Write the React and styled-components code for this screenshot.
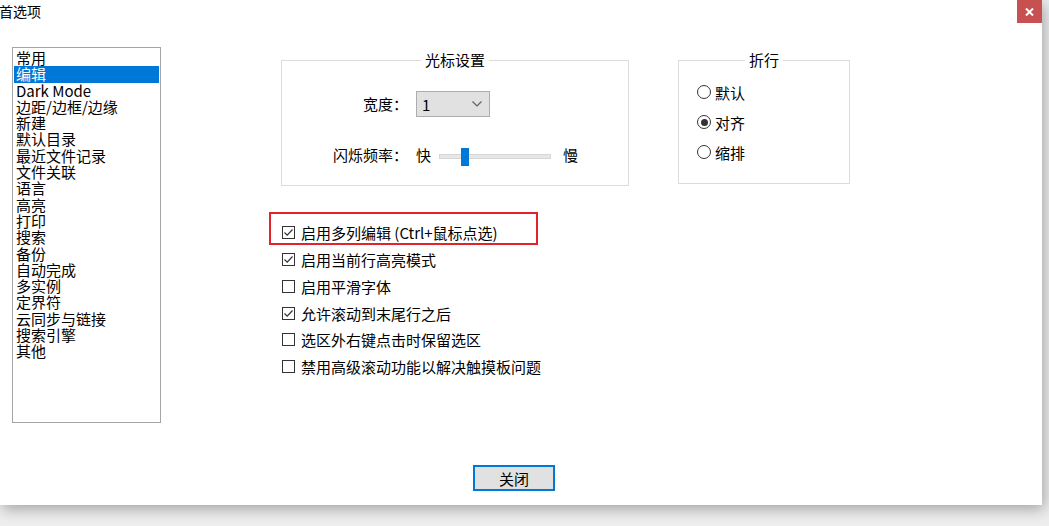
import React from "react";
import styled, { createGlobalStyle } from "styled-components";

const GlobalStyle = createGlobalStyle`
  html, body {
    margin: 0;
    padding: 0;
  }
  body {
    width: 1049px;
    height: 526px;
    overflow: hidden;
    background: #eeeeee;
    font-family: "Noto Sans CJK SC", "Noto Sans", sans-serif;
    color: #000;
  }
`;

const Dialog = styled.div`
  width: 1042px;
  height: 505px;
  background: #fff;
  box-shadow: 2px 4px 14px rgba(0, 0, 0, 0.32);
  display: flex;
  flex-direction: column;
  overflow: hidden;
`;

const TitleBar = styled.div`
  height: 23px;
  display: flex;
  justify-content: space-between;
  align-items: flex-start;
`;

const Title = styled.div`
  font-size: 14px;
  line-height: 20px;
  padding-top: 1px;
  margin-left: -1px;
`;

const CloseBox = styled.div`
  width: 25px;
  height: 23px;
  background: #c75050;
  display: flex;
  align-items: center;
  justify-content: center;
`;

const Body = styled.div`
  flex: 1;
  display: flex;
  align-items: flex-start;
`;

const ListBox = styled.div`
  box-sizing: border-box;
  margin: 24px 0 0 12px;
  width: 149px;
  height: 376px;
  border: 1px solid #a5a5a5;
  padding: 2px 1px;
  font-size: 15px;
  line-height: 16.3px;
`;

const ListItem = styled.div`
  padding-left: 2px;
  white-space: nowrap;
  background: ${(p) => (p.$active ? "#0078d7" : "transparent")};
  color: ${(p) => (p.$active ? "#fff" : "#000")};
`;

const Main = styled.div`
  margin-left: 120px;
  padding-top: 37px;
  display: flex;
  flex-direction: column;
`;

const GroupRow = styled.div`
  display: flex;
  gap: 49px;
  align-items: flex-start;
`;

const GroupBox = styled.div`
  box-sizing: border-box;
  width: ${(p) => p.$w}px;
  height: ${(p) => p.$h}px;
  border: 1px solid #dcdcdc;
  display: flex;
  flex-direction: column;
`;

const Legend = styled.div`
  align-self: center;
  margin-top: -9px;
  padding: 0 4px;
  background: #fff;
  font-size: 15px;
  line-height: 16px;
`;

const FieldGrid = styled.div`
  display: grid;
  grid-template-columns: 126px auto;
  column-gap: 8px;
  row-gap: 28px;
  align-items: center;
  margin-top: 23px;
  font-size: 15px;
`;

const FieldLabel = styled.div`
  text-align: right;
  line-height: 20px;
`;

const Combo = styled.div`
  box-sizing: border-box;
  width: 74px;
  height: 26px;
  background: #e1e1e1;
  border: 1px solid #adadad;
  display: flex;
  align-items: center;
  justify-content: space-between;
  padding: 0 7px 0 5px;
  font-size: 15px;
`;

const SliderRow = styled.div`
  display: flex;
  align-items: center;
  height: 20px;
  line-height: 20px;
`;

const SliderTrack = styled.div`
  position: relative;
  box-sizing: border-box;
  width: 112px;
  height: 5px;
  margin: 3px 12px 0 8px;
  background: #e7e7e7;
  border: 1px solid #d6d6d6;
`;

const SliderThumb = styled.div`
  position: absolute;
  top: -7px;
  width: 8px;
  height: 18px;
  background: #0078d7;
`;

const RadioList = styled.div`
  margin-top: 9px;
  padding-left: 18px;
  display: flex;
  flex-direction: column;
`;

const Option = styled.div`
  display: flex;
  align-items: center;
  gap: ${(p) => p.$gap}px;
  height: ${(p) => p.$h}px;
  font-size: 15px;
  white-space: nowrap;
`;

const RadioCircle = styled.span`
  box-sizing: border-box;
  width: 14px;
  height: 14px;
  border-radius: 50%;
  border: 1px solid #333;
  background: #fff;
  display: flex;
  align-items: center;
  justify-content: center;
  &::after {
    content: "";
    width: 7px;
    height: 7px;
    border-radius: 50%;
    background: ${(p) => (p.$on ? "#333" : "transparent")};
  }
`;

const CheckBox = styled.span`
  box-sizing: border-box;
  width: 13px;
  height: 13px;
  border: 1px solid #333;
  background: #fff;
  display: flex;
  align-items: center;
  justify-content: center;
`;

const CheckList = styled.div`
  position: relative;
  margin: 33.6px 0 0 1px;
  display: flex;
  flex-direction: column;
`;

const RedMark = styled.div`
  position: absolute;
  left: -13px;
  top: -7.6px;
  width: 269px;
  height: 33px;
  box-sizing: border-box;
  border: 2px solid #e3232b;
`;

const Footer = styled.div`
  padding: 0 0 14px 473px;
`;

const Button = styled.div`
  box-sizing: border-box;
  width: 82px;
  height: 26px;
  border: 2px solid #0078d7;
  background: #e1e1e1;
  display: flex;
  align-items: center;
  justify-content: center;
  font-size: 15px;
`;

const items = [
  "常用", "编辑", "Dark Mode", "边距/边框/边缘", "新建", "默认目录", "最近文件记录",
  "文件关联", "语言", "高亮", "打印", "搜索", "备份", "自动完成", "多实例", "定界符",
  "云同步与链接", "搜索引擎", "其他",
];

const checks = [
  ["启用多列编辑 (Ctrl+鼠标点选)", true],
  ["启用当前行高亮模式", true],
  ["启用平滑字体", false],
  ["允许滚动到末尾行之后", true],
  ["选区外右键点击时保留选区", false],
  ["禁用高级滚动功能以解决触摸板问题", false],
];

const radios = [["默认", false], ["对齐", true], ["缩排", false]];

export default function App() {
  return (
    <>
      <GlobalStyle />
      <Dialog>
        <TitleBar>
          <Title>首选项</Title>
          <CloseBox>
            <svg width="9" height="8" viewBox="0 0 9 8">
              <path d="M1 0.5 L8 7.5 M8 0.5 L1 7.5" stroke="#fff" strokeWidth="2" />
            </svg>
          </CloseBox>
        </TitleBar>
        <Body>
          <ListBox>
            {items.map((t, i) => (
              <ListItem key={t} $active={i === 1}>{t}</ListItem>
            ))}
          </ListBox>
          <Main>
            <GroupRow>
              <GroupBox $w={348} $h={126}>
                <Legend>光标设置</Legend>
                <FieldGrid>
                  <FieldLabel>宽度：</FieldLabel>
                  <Combo>
                    <span>1</span>
                    <svg width="10" height="6" viewBox="0 0 10 6">
                      <polyline points="0.5,0.5 5,5 9.5,0.5" fill="none" stroke="#606060" strokeWidth="1.2" />
                    </svg>
                  </Combo>
                  <FieldLabel>闪烁频率：</FieldLabel>
                  <SliderRow>
                    <span>快</span>
                    <SliderTrack>
                      <SliderThumb style={{ left: 21 }} />
                    </SliderTrack>
                    <span>慢</span>
                  </SliderRow>
                </FieldGrid>
              </GroupBox>
              <GroupBox $w={172} $h={124}>
                <Legend>折行</Legend>
                <RadioList>
                  {radios.map(([t, on]) => (
                    <Option key={t} $gap={4} $h={30}>
                      <RadioCircle $on={on} />
                      <span>{t}</span>
                    </Option>
                  ))}
                </RadioList>
              </GroupBox>
            </GroupRow>
            <CheckList>
              <RedMark />
              {checks.map(([t, on]) => (
                <Option key={t} $gap={6} $h={26.7}>
                  <CheckBox>
                    {on && (
                      <svg width="11" height="11" viewBox="0 0 11 11">
                        <polyline points="1.5,5.5 4.2,8.2 9.5,2.5" fill="none" stroke="#333" strokeWidth="1.2" />
                      </svg>
                    )}
                  </CheckBox>
                  <span>{t}</span>
                </Option>
              ))}
            </CheckList>
          </Main>
        </Body>
        <Footer>
          <Button>关闭</Button>
        </Footer>
      </Dialog>
    </>
  );
}
